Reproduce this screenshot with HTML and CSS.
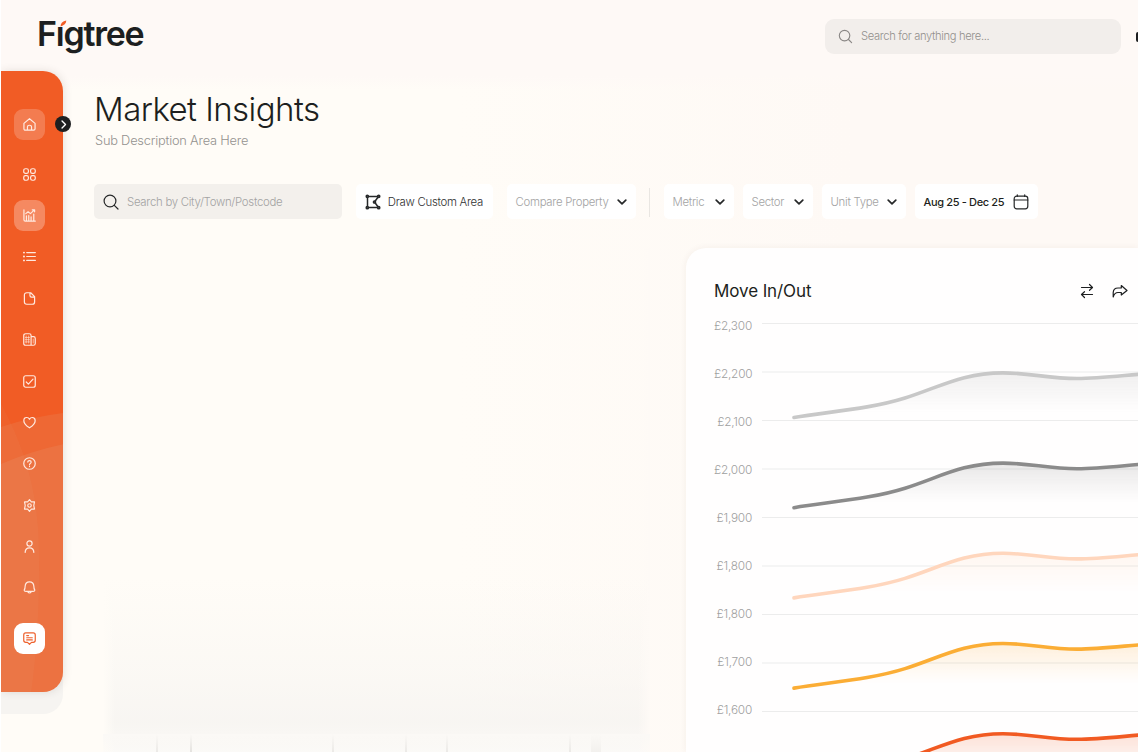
FILE: index.html
```html
<!DOCTYPE html>
<html lang="en">
  <head>
    <meta charset="UTF-8" />
    <meta name="viewport" content="width=device-width, initial-scale=1.0" />
    <title>Figtree - Market Insights</title>
    <link rel="stylesheet" href="styles.css">
  </head>
  <body>
    <header class="header">
      <div class="logo">F<span class="logo-i">ı<svg class="leaf" viewBox="0 0 8 8"><path d="M0.6 7.4C0.6 3.6 3 1.4 7.2 0.6C7 4.4 4.6 6.3 0.6 7.4Z" /></svg></span>gtree</div>
      <div class="global-search">
        <svg class="icon" viewBox="0 0 16 16"><circle cx="7" cy="7" r="5.6" /><path d="M11.2 11.2L14.5 14.5" /></svg>
        <span>Search for anything here...</span>
      </div>
      <div class="avatar"></div>
    </header>

    <div class="layout">
      <div class="sidebar-wrap">
        <nav class="sidebar">
          <svg class="swirl" viewBox="0 0 63 622" preserveAspectRatio="none">
            <path d="M0 356Q30 346 63 342V622H0Z" />
            <path d="M0 393Q30 380 63 373V622H0Z" />
            <path class="soft" d="M0 333Q38 402 38 480Q39 560 30 622H0Z" />
          </svg>
          <a class="nav-item home"><svg class="icon" viewBox="0 0 14 14"><path d="M1 5.8L7 0.8L13 5.8V11.5Q13 13 11.5 13H2.5Q1 13 1 11.5ZM4.8 13V9.8Q4.8 7.8 7 7.8T9.2 9.8V13" /></svg></a>
          <a class="nav-item"><svg class="icon" viewBox="0 0 14 14"><rect x="0.8" y="0.8" width="5" height="5" rx="1.8" /><rect x="8.2" y="0.8" width="5" height="5" rx="1.8" /><rect x="0.8" y="8.2" width="5" height="5" rx="1.8" /><rect x="8.2" y="8.2" width="5" height="5" rx="1.8" /></svg></a>
          <a class="nav-item active"><svg class="icon" viewBox="0 0 14 14"><path d="M1 0.8V11.5Q1 13 2.5 13H13.3M3.7 13V7.5M6.2 13V7M8.7 13V8.5M11.6 13V5.5M3 5L5.5 3L8 5L12.3 1M10 0.9H12.5V3" /></svg></a>
          <a class="nav-item"><svg class="icon" viewBox="0 0 14 14"><path d="M4 2.8H13.3M4 7H13.3M4 11.2H13.3" /><path class="dots" d="M1 2.8H1.1M1 7H1.1M1 11.2H1.1" /></svg></a>
          <a class="nav-item"><svg class="icon" viewBox="0 0 14 14"><path d="M4 0.8H8.3L12.5 5V10.7Q12.5 13.2 10 13.2H4Q1.5 13.2 1.5 10.7V3.3Q1.5 0.8 4 0.8ZM7.5 0.8V3.8Q7.5 5.5 9.2 5.5H12.5" /></svg></a>
          <a class="nav-item"><svg class="icon" viewBox="0 0 14 14"><path d="M2.8 0.8H6.7Q8.7 0.8 8.7 2.8V13.2H2.8Q0.8 13.2 0.8 11.2V2.8Q0.8 0.8 2.8 0.8ZM8.7 4H11.2Q13.2 4 13.2 6V11.2Q13.2 13.2 11.2 13.2H8.7" /><path class="thin" d="M3.4 3.2V10.8M6.1 3.2V10.8M2.5 4.8H7M2.5 7.2H7M2.5 9.6H7M11 6.5V10.8" /></svg></a>
          <a class="nav-item"><svg class="icon" viewBox="0 0 14 14"><rect x="0.8" y="0.8" width="12.4" height="12.4" rx="2.2" /><path d="M3.5 7.5L5.8 9.8L10.8 4.5" /></svg></a>
          <a class="nav-item"><svg class="icon" viewBox="0 0 14 14"><path d="M7 12.7Q0.9 8.7 0.9 5Q0.9 1.6 4 1.6Q6 1.6 7 3.5Q8 1.6 10 1.6Q13.1 1.6 13.1 5Q13.1 8.7 7 12.7Z" /></svg></a>
          <a class="nav-item"><svg class="icon" viewBox="0 0 14 14"><circle cx="7" cy="7" r="6.2" /><path d="M5.2 5.5Q5.2 3.9 7 3.9T8.8 5.5Q8.8 6.4 7.9 6.9T7 8.4M7 10.2V10.3" /></svg></a>
          <a class="nav-item"><svg class="icon" viewBox="0 0 14 14"><path d="M7 0.7L9 3L12.4 3.2L11.6 7L12.4 10.8L9 11L7 13.3L5 11L1.6 10.8L2.4 7L1.6 3.2L5 3Z" /><circle cx="7" cy="7" r="1.9" /></svg></a>
          <a class="nav-item"><svg class="icon" viewBox="0 0 14 14"><circle cx="7" cy="3.7" r="2.8" /><path d="M2.3 13.3Q2.6 8.5 7 8.5T11.7 13.3" /></svg></a>
          <a class="nav-item"><svg class="icon" viewBox="0 0 14 14"><path d="M1.3 9.9Q2.3 8.3 2.3 5.7Q2.6 0.9 7 0.9T11.7 5.7Q11.7 8.3 12.7 9.9Q12.6 11.2 11 11.2H3Q1.4 11.2 1.3 9.9ZM5 11.5Q7 14.3 9 11.5" /></svg></a>
          <a class="nav-item chat"><svg class="icon" viewBox="0 0 14 14"><path d="M3 1H11Q13.2 1 13.2 3.2V9Q13.2 11.2 11 11.2H9.2L7 13.2L4.8 11.2H3Q0.8 11.2 0.8 9V3.2Q0.8 1 3 1ZM4 3.9H6M4 6.2H10M4 8.5H10" /></svg></a>
        </nav>
        <button class="toggle"><svg class="icon" viewBox="0 0 8 8"><path d="M2.7 0.9L5.8 4L2.7 7.1" /></svg></button>
      </div>

      <main class="main">
        <h1 class="title">Market Insights</h1>
        <p class="subtitle">Sub Description Area Here</p>

        <div class="filters">
          <div class="filter search">
            <svg class="icon" viewBox="0 0 16 16"><circle cx="7" cy="7" r="5.9" /><path d="M11.3 11.3L15 15" /></svg>
            <span>Search by City/Town/Postcode</span>
          </div>
          <div class="filter draw">
            <svg class="icon" viewBox="0 0 16 16"><path d="M2.5 2.5H13.5L9.5 8L13.5 13.5H2.5Z" /><g class="nodes"><circle cx="2.3" cy="2.3" r="1.1" /><circle cx="13.7" cy="2.3" r="1.1" /><circle cx="9.5" cy="8" r="1.1" /><circle cx="2.3" cy="13.7" r="1.1" /><circle cx="13.7" cy="13.7" r="1.1" /></g></svg>
            <span>Draw Custom Area</span>
          </div>
          <div class="filter compare"><span>Compare Property</span><svg class="icon chevron" viewBox="0 0 10 10"><path d="M1.2 3.2L5 6.8L8.8 3.2" /></svg></div>
          <div class="divider"></div>
          <div class="filter metric"><span>Metric</span><svg class="icon chevron" viewBox="0 0 10 10"><path d="M1.2 3.2L5 6.8L8.8 3.2" /></svg></div>
          <div class="filter sector"><span>Sector</span><svg class="icon chevron" viewBox="0 0 10 10"><path d="M1.2 3.2L5 6.8L8.8 3.2" /></svg></div>
          <div class="filter unit"><span>Unit Type</span><svg class="icon chevron" viewBox="0 0 10 10"><path d="M1.2 3.2L5 6.8L8.8 3.2" /></svg></div>
          <div class="filter date">
            <span>Aug 25 - Dec 25</span>
            <svg class="icon" viewBox="0 0 16 16"><rect x="1.2" y="2.2" width="13.6" height="12.6" rx="2.5" /><path d="M1.2 6H14.8M4.3 0.8V2.5M11.7 0.8V2.5" /></svg>
          </div>
        </div>

        <div class="content">
          <div class="map"></div>
          <section class="card">
            <div class="card-head">
              <h2>Move In/Out</h2>
              <svg class="icon" viewBox="0 0 16 16"><path d="M2.5 4.5H13.5M10.5 1.5L13.5 4.5L10.5 7.3M13.5 11.5H2.5M5.5 8.7L2.5 11.5L5.5 14.5" /></svg>
              <svg class="icon" viewBox="0 0 16 16"><path d="M9.3 2.5L15 7.5L9.3 12V9.5H6Q2.5 9.5 1.2 14V9.5Q1.5 5 6 5H9.3Z" /></svg>
            </div>
            <div class="chart">
              <ul class="axis">
                <li>£2,300</li>
                <li>£2,200</li>
                <li>£2,100</li>
                <li>£2,000</li>
                <li>£1,900</li>
                <li>£1,800</li>
                <li>£1,800</li>
                <li>£1,700</li>
                <li>£1,600</li>
              </ul>
              <svg class="plot" viewBox="762 313 376 439" width="376" height="439">
                <defs>
                  <linearGradient id="fade" x1="0" y1="0" x2="0" y2="1">
                    <stop offset="0" stop-color="#fff" stop-opacity="1" />
                    <stop offset="0.9" stop-color="#fff" stop-opacity="0" />
                  </linearGradient>
                  <mask id="area-mask"><rect x="762" y="372" width="376" height="45" fill="url(#fade)" /></mask>
                  <path id="line" d="M794 417.5C830 411.5 870 409 905 398C940 387 962 372.9 1003 372.9C1030 372.9 1048 378.5 1077 378.5C1098 378.5 1118 376 1142 374" />
                  <g id="area" mask="url(#area-mask)"><path d="M794 417.5C830 411.5 870 409 905 398C940 387 962 372.9 1003 372.9C1030 372.9 1048 378.5 1077 378.5C1098 378.5 1118 376 1142 374V418H794Z" /></g>
                </defs>
                <path class="grid" d="M762 323.5H1138M762 372H1138M762 420.5H1138M762 469H1138M762 517.5H1138M762 566H1138M762 614.5H1138M762 663H1138M762 711.5H1138" />
                <g class="series light"><use href="#area" /><use href="#line" /></g>
                <g class="series dark" transform="translate(0 90.2)"><use href="#area" /><use href="#line" /></g>
                <g class="series peach" transform="translate(0 180.4)"><use href="#area" /><use href="#line" /></g>
                <g class="series amber" transform="translate(0 270.6)"><use href="#area" /><use href="#line" /></g>
                <g class="series orange" transform="translate(0 360.8)"><use href="#area" /><use href="#line" /></g>
              </svg>
            </div>
          </section>
        </div>
      </main>
    </div>
  </body>
</html>
```

FILE: styles.css
```css
* {
  box-sizing: border-box;
}
body {
  margin: 0;
  height: 752px;
  overflow: hidden;
  font-family: "Inter", "Liberation Sans", sans-serif;
  color: #1d1f20;
  background: linear-gradient(180deg, #fef9f6 0, #fef9f6 76px, rgba(254, 249, 246, 0) 90px),
    linear-gradient(90deg, #fffcf7 0, #fffcf7 40%, #fef9f5 75%);
  border-left: 1px solid #fff;
}
.icon {
  fill: none;
  stroke: currentColor;
  stroke-width: 1.2;
  stroke-linecap: round;
  stroke-linejoin: round;
  flex: none;
}

/* header */
.header {
  display: flex;
  align-items: center;
  height: 71px;
  padding-left: 36px;
  overflow: hidden;
}
.logo {
  width: 107px;
  margin: 0 auto 3px 0;
  font-size: 34px;
  font-weight: 600;
  letter-spacing: -1.25px;
  line-height: 40px;
  white-space: nowrap;
}
.logo-i {
  position: relative;
}
.leaf {
  position: absolute;
  left: 4px;
  top: 7px;
  width: 7px;
  height: 7px;
  fill: #f15c25;
}
.global-search {
  display: flex;
  align-items: center;
  flex: none;
  width: 296px;
  height: 35px;
  margin-top: 2px;
  padding: 0 0 1px 13px;
  border-radius: 9px;
  background: #f2eeeb;
  color: #93908d;
  font-size: 11.2px;
  font-weight: 300;
  letter-spacing: -0.35px;
}
.global-search .icon {
  width: 15px;
  height: 15px;
  margin-right: 8px;
  color: #8a8785;
}
/* only the edge of the avatar fits in the header */
.avatar {
  flex: none;
  width: 2px;
  height: 10px;
  margin: 2px 0 0 15px;
  border-radius: 8px 0 0 8px;
  background: #1d1f20;
}

.layout {
  display: flex;
}

/* sidebar */
.sidebar-wrap {
  position: relative;
  flex: none;
  width: 62px;
  height: 643px;
  border-radius: 0 20px 20px 0;
  background: #f6f4f1;
}
.sidebar {
  position: relative;
  display: flex;
  flex-direction: column;
  align-items: center;
  gap: 10.4px;
  height: 621px;
  padding: 37.5px 5px 0 0;
  border-radius: 0 20px 20px 0;
  background: #f15c25;
  overflow: hidden;
}
.sidebar-wrap::before {
  content: "";
  position: absolute;
  inset: 0 0 22px 0;
  border-radius: 0 20px 20px 0;
  box-shadow: 1px 0 8px rgba(60, 50, 40, 0.13);
}
.swirl {
  position: absolute;
  inset: 0;
  width: 63px;
  height: 622px;
  fill: rgba(225, 185, 155, 0.13);
}
.swirl .soft {
  fill: rgba(225, 185, 155, 0.06);
}
.nav-item {
  position: relative;
  display: flex;
  align-items: center;
  justify-content: center;
  flex: none;
  width: 31px;
  height: 31px;
  border-radius: 9px;
  color: #ffe9df;
}
.nav-item .icon {
  width: 13px;
  height: 13px;
  stroke-width: 1.3;
}
.nav-item .thin {
  stroke-width: 0.7;
}
.nav-item .dots {
  stroke-width: 2;
}
.home {
  margin-bottom: 8.7px;
  background: rgba(255, 255, 255, 0.2);
}
.active {
  background: rgba(255, 255, 255, 0.28);
}
.chat {
  margin-top: 8.9px;
  background: #fff;
  color: #ee622f;
}
.toggle {
  position: absolute;
  left: 54px;
  top: 45px;
  display: flex;
  align-items: center;
  justify-content: center;
  width: 16px;
  height: 16px;
  padding: 0;
  border: none;
  border-radius: 50%;
  background: #1d1f20;
  color: #fff;
}
.toggle .icon {
  width: 9px;
  height: 9px;
}

/* page heading */
.main {
  flex: 1;
  min-width: 0;
  padding: 18px 0 0 31px;
}
.title {
  margin: 0;
  font-size: 33px;
  font-weight: 300;
  line-height: 40px;
  letter-spacing: -0.55px;
  white-space: nowrap;
}
.subtitle {
  margin: 3px 0 0 1px;
  font-size: 12.8px;
  font-weight: 300;
  line-height: 18px;
  letter-spacing: -0.2px;
  color: #94928f;
}

/* filters */
.filters {
  display: flex;
  height: 35px;
  margin-top: 34px;
}
.filter {
  display: flex;
  align-items: center;
  justify-content: space-between;
  flex: none;
  padding: 0 9px;
  border-radius: 5px;
  background: #fff;
  color: #a3a3a3;
  font-size: 11.4px;
  font-weight: 300;
  letter-spacing: -0.28px;
  white-space: nowrap;
}
.filter .icon {
  width: 16px;
  height: 16px;
  color: #262829;
}
.filter .chevron {
  width: 10px;
  height: 10px;
  stroke-width: 1.7;
}
.search {
  justify-content: flex-start;
  gap: 8px;
  width: 248px;
  margin-right: 14px;
  background: #f3f0ec;
}
.draw {
  width: 137px;
  margin-right: 13.5px;
  padding-right: 10px;
  color: #303132;
}
.draw .icon {
  stroke-width: 1.5;
}
.nodes {
  fill: #777;
}
.compare {
  width: 129px;
}
.divider {
  width: 1px;
  height: 29px;
  margin: 4px 14px 0 13px;
  background: #e9e6e2;
}
.metric {
  width: 70px;
  margin-right: 9px;
}
.sector {
  width: 70px;
  margin-right: 9px;
}
.unit {
  width: 84px;
  margin-right: 9px;
}
.date {
  width: 123px;
  color: #1d1f20;
  font-size: 11px;
  font-weight: 500;
  letter-spacing: -0.35px;
}

/* map and chart card */
.content {
  display: flex;
  margin-top: 29px;
}
.map {
  flex: none;
  width: 547px;
  height: 504px;
  margin: 0 36px 0 9px;
  background:
    linear-gradient(180deg, rgba(251, 249, 246, 1), rgba(251, 249, 246, 0.2)) 0 486px / 547px 18px no-repeat,
    linear-gradient(90deg, transparent 53px, #e8e6e3 53px 55px, transparent 55px 87px, #dfddda 87px 89px, transparent 89px 229px, #e8e6e3 229px 231px, transparent 231px 302px, #e8e6e3 302px 304px, transparent 304px 343px, #e8e6e3 343px 345px, transparent 345px 466px, #e8e6e3 466px 468px, transparent 468px 488px, #f1efec 488px 498px, transparent 498px) 0 486px / 547px 20px no-repeat,
    linear-gradient(90deg, #fffcf7, transparent 12px calc(100% - 12px), #fefaf6),
    linear-gradient(180deg, rgba(246, 244, 241, 0) 330px, rgba(246, 244, 241, 0.4) 420px, rgba(246, 244, 241, 0.8) 475px, rgba(250, 249, 247, 0.8) 504px);
}
.card {
  flex: 1;
  min-width: 0;
  height: 504px;
  padding: 29px 0 0 28px;
  border-radius: 20px 0 0 0;
  background: #fffefe;
  box-shadow: 0 0 7px rgba(80, 50, 30, 0.06);
  overflow: hidden;
}
.card-head {
  display: flex;
  align-items: center;
  width: 414px;
  height: 27px;
}
.card-head h2 {
  margin: 0 auto 0 0;
  font-size: 17px;
  font-weight: 400;
  letter-spacing: -0.1px;
}
.card-head .icon {
  width: 16px;
  height: 16px;
  margin-left: 17px;
}
.chart {
  display: flex;
  margin-top: 9px;
}
.axis {
  width: 38px;
  margin: 0 10px 0 0;
  padding: 1px 0 0;
  list-style: none;
  text-align: right;
}
.axis li {
  height: 48px;
  font-size: 11.8px;
  font-weight: 300;
  line-height: 25px;
  letter-spacing: -0.2px;
  color: #a0a0a0;
}
.plot {
  flex: none;
}
.grid {
  stroke: #ececec;
  stroke-width: 1.2;
}
.series {
  fill: none;
  stroke-width: 3.6;
  stroke-linecap: round;
}
.series use:first-child {
  stroke: none;
}
.light {
  stroke: #c8c8c8;
}
.light use:first-child {
  fill: rgba(110, 110, 110, 0.1);
}
.dark {
  stroke: #8b8b8b;
}
.dark use:first-child {
  fill: rgba(90, 90, 90, 0.14);
}
.peach {
  stroke: #ffd6bd;
}
.peach use:first-child {
  fill: rgba(255, 190, 150, 0.13);
}
.amber {
  stroke: #fbad35;
}
.amber use:first-child {
  fill: rgba(251, 165, 45, 0.17);
}
.orange {
  stroke: #f15a22;
}
.orange use:first-child {
  fill: rgba(241, 90, 34, 0.18);
}
```
